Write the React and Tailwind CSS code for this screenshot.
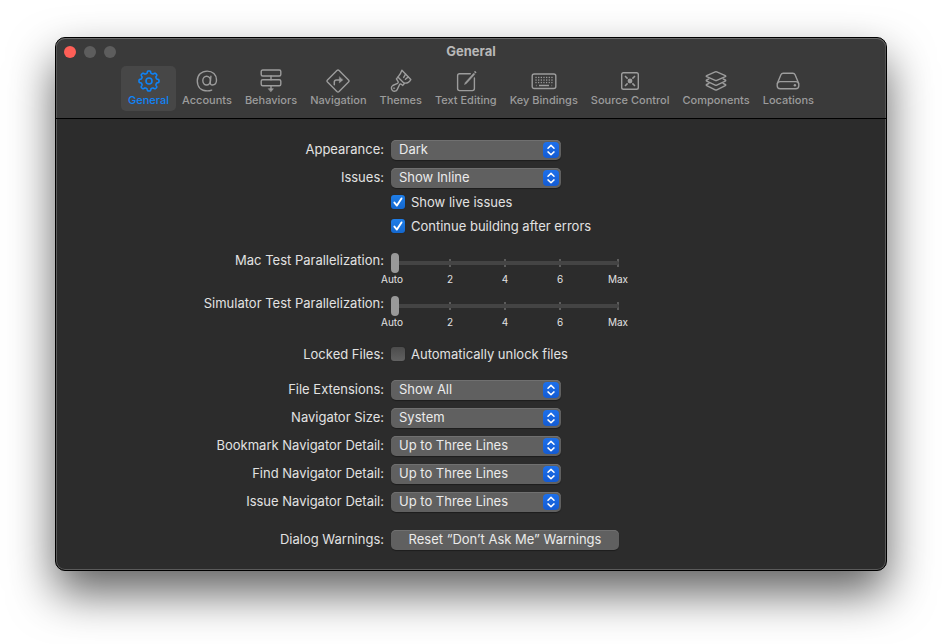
import { useState } from "react";

/* Smooth eight-toothed outline around the centre of the icon box. */
function gearOutline() {
  const points = [];
  for (let i = 0; i < 240; i++) {
    const a = (i / 240) * Math.PI * 2;
    const r = 8.9 + 1.1 * (Math.tanh(2.2 * Math.cos(8 * a)) / Math.tanh(2.2));
    points.push(`${(13 + r * Math.cos(a)).toFixed(2)} ${(12 + r * Math.sin(a)).toFixed(2)}`);
  }
  return `M${points.join("L")}Z`;
}

const GEAR = gearOutline();

function Icon({ children }) {
  return (
    <svg
      viewBox="0 0 26 24"
      className="h-6 w-[26px]"
      fill="none"
      stroke="currentColor"
      strokeWidth="1.4"
      strokeLinecap="round"
      strokeLinejoin="round"
      aria-hidden="true"
    >
      {children}
    </svg>
  );
}

const keyDots = [];
[7.8, 10.4, 12.9].forEach((y, row) => {
  for (let i = 0; i < 7; i++) keyDots.push([4.6 + i * 2.65, y, row]);
});

const TABS = [
  {
    name: "General",
    icon: (
      <Icon>
        <path d={GEAR} strokeWidth="1.6" />
        <circle cx="13" cy="12" r="3" strokeWidth="1.6" />
      </Icon>
    ),
  },
  {
    name: "Accounts",
    icon: (
      <Icon>
        <ellipse cx="12.6" cy="11.6" rx="3.8" ry="4.4" />
        <path d="M16.9 7.2l-.6 6.300c-.1 1.600.6 2.500 2 2.500 2.600 0 4.200-2 4.200-5 0-5.300-3.800-8.900-9.300-8.900-5.900 0-9.900 4-9.900 9.900 0 6.100 3.900 9.900 10 9.900 1.700 0 3.100-.3 4.400-.8" />
      </Icon>
    ),
  },
  {
    name: "Behaviors",
    icon: (
      <Icon>
        <rect x="3.200" y="1" width="19.600" height="6" rx="1.500" />
        <rect x="3.200" y="10.700" width="19.600" height="6" rx="1.500" />
        <path d="M13 7v3.700M13 16.700v3" />
        <path d="M10.600 19.700h4.800L13 22.600z" fill="currentColor" strokeWidth=".6" />
      </Icon>
    ),
  },
  {
    name: "Navigation",
    icon: (
      <Icon>
        <path d="M11.900 1.500a1.600 1.600 0 0 1 2.200 0l9.400 9.400a1.600 1.600 0 0 1 0 2.200l-9.400 9.400a1.600 1.600 0 0 1-2.200 0l-9.400-9.400a1.600 1.600 0 0 1 0-2.200z" />
        <path d="M9.300 15.700v-2.600a2.200 2.200 0 0 1 2.200-2.200h5" strokeWidth="1.500" />
        <path d="M14.300 7.900v6l3.600-3z" fill="currentColor" strokeWidth=".4" />
      </Icon>
    ),
  },
  {
    name: "Themes",
    icon: (
      <Icon>
        <path d="M13.900 1.200l8.900 9.400c-1.600 2.700-4 4-7 3.400L9.900 8.100c1.800-2.100 3.200-4.300 4-6.900z" />
        <path d="M17.600 5.100l-1.900 3.300M20.300 7.900l-2.900 2.300" />
        <path d="M9.900 8.100l-1.500 1.800 1.700 2.700c.4.800.2 1.300-.6 1.700l-4.700 2.200a3.100 3.100 0 1 0 4.500 3.900l2.200-4.600c.4-.8.9-1 1.700-.6l1.600 1.200 1.800-2.100" />
        <circle cx="6" cy="19.200" r=".7" fill="currentColor" strokeWidth=".3" />
      </Icon>
    ),
  },
  {
    name: "Text Editing",
    icon: (
      <Icon>
        <path d="M17.300 4.800H6.600a2 2 0 0 0-2 2v12.800a2 2 0 0 0 2 2h12.800a2 2 0 0 0 2-2V9" />
        <path d="M20.600 4.300l-8.300 9.200-.8 2 1.900-.9 8.300-9.200z" fill="currentColor" strokeWidth=".5" />
        <path d="M22 2.900l.6.600" strokeWidth="1.600" />
      </Icon>
    ),
  },
  {
    name: "Key Bindings",
    icon: (
      <Icon>
        <rect x="1.200" y="5" width="23.600" height="14.500" rx="2" />
        {keyDots.map(([x, y, row], i) => (
          <rect
            key={i}
            x={x - 0.2}
            y={y}
            width={row === 2 ? 1.2 : 1.3}
            height="1.300"
            fill="currentColor"
            stroke="none"
          />
        ))}
        <path d="M8 16.500h10M4.900 16.500h.6M20.600 16.500h.5" strokeWidth="1.300" strokeLinecap="butt" />
      </Icon>
    ),
  },
  {
    name: "Source Control",
    icon: (
      <Icon>
        <rect x="4.700" y="3.700" width="16.600" height="16.600" rx="1.800" />
        <circle cx="13" cy="12" r="2.400" fill="currentColor" stroke="none" />
        <path
          d="M8 7l2.600 2.600M18 7l-2.600 2.600M8 17l2.600-2.600M18 17l-2.600-2.600"
          strokeWidth="1.500"
          strokeLinecap="butt"
        />
      </Icon>
    ),
  },
  {
    name: "Components",
    icon: (
      <Icon>
        <path d="M12.200 2.900a2 2 0 0 1 1.600 0l8.500 3.700c.6.300.6.800 0 1.100l-8.500 3.700a2 2 0 0 1-1.600 0L3.700 7.700c-.6-.3-.6-.8 0-1.100z" />
        <path d="M5.900 9.900l-2.200 1.100c-.6.300-.6.800 0 1.100l8.500 4a2 2 0 0 0 1.600 0l8.500-4c.6-.3.6-.8 0-1.100l-2.200-1.100" />
        <path d="M5.900 14.400l-2.200 1.100c-.6.300-.6.800 0 1.100l8.500 4.300a2 2 0 0 0 1.600 0l8.500-4.300c.6-.3.6-.8 0-1.100l-2.200-1.100" />
      </Icon>
    ),
  },
  {
    name: "Locations",
    icon: (
      <Icon>
        <path d="M2.400 14.300l3.500-8.600a2.600 2.600 0 0 1 2.300-1.500h9.600a2.600 2.600 0 0 1 2.300 1.500l3.500 8.600" />
        <rect x="2.200" y="12.600" width="21.600" height="7.200" rx="3" />
        <circle cx="19.900" cy="16.200" r="1.200" fill="currentColor" stroke="none" />
      </Icon>
    ),
  },
];

const ROW = "grid grid-cols-[328px_1fr] gap-x-[7px]";
const LABEL = "text-right leading-[18px]";

function PopUp({ id, label, value, options }) {
  return (
    <div className={ROW}>
      <label htmlFor={id} className={LABEL}>
        {label}
      </label>
      <div className="relative h-5 w-[170px]">
        <select
          id={id}
          defaultValue={value}
          className="block h-5 w-full appearance-none rounded-[5px] bg-[#606060] pr-6 pb-0.5 pl-2 leading-[18px] text-[#ebebeb] shadow-[inset_0_1px_0_#707070,0_1px_1px_rgba(0,0,0,0.35)] outline-none"
        >
          {options.map((o) => (
            <option key={o}>{o}</option>
          ))}
        </select>
        <span className="pointer-events-none absolute top-0.5 right-0.5 flex size-4 items-center justify-center rounded-[4px] bg-linear-to-b from-[#1d70ea] to-[#145bd2]">
          <svg
            viewBox="0 0 16 16"
            className="size-4"
            fill="none"
            stroke="#fff"
            strokeWidth="1.500"
            strokeLinecap="round"
            strokeLinejoin="round"
            aria-hidden="true"
          >
            <path d="M5 6.200L8 3.400l3 2.800M5 9.900l3 2.800 3-2.800" />
          </svg>
        </span>
      </div>
    </div>
  );
}

function Check({ label, checked = false }) {
  return (
    <label className="flex h-5 w-fit items-center gap-1.5 leading-5">
      <span className="relative size-3.5">
        <input
          type="checkbox"
          defaultChecked={checked}
          className="peer block size-3.5 appearance-none rounded-[3px] bg-linear-to-b from-[#4c4c4c] to-[#616161] shadow-[0_0_1px_rgba(0,0,0,0.4)] checked:from-[#1f7ee8] checked:to-[#1468cf]"
        />
        <svg
          viewBox="0 0 14 14"
          className="pointer-events-none absolute inset-0 hidden size-3.5 peer-checked:block"
          fill="none"
          stroke="#fff"
          strokeWidth="1.900"
          strokeLinecap="round"
          strokeLinejoin="round"
          aria-hidden="true"
        >
          <path d="M3.400 7.600l2.500 3L10.500 3.400" />
        </svg>
      </span>
      {label}
    </label>
  );
}

const STOPS = "grid grid-cols-[58px_55px_55px_58px_0px]";

function Parallelization({ id, label }) {
  return (
    <div className={ROW}>
      <label htmlFor={id} className="h-4 text-right leading-[14px]">
        {label}
      </label>
      <div className="w-[228px]">
        <div className="relative h-5">
          <div className={`absolute inset-x-0 top-1.5 ${STOPS}`} aria-hidden="true">
            <span />
            <span className="h-2 w-0.5 bg-[#5c5c5c]" />
            <span className="h-2 w-0.5 bg-[#5c5c5c]" />
            <span className="h-2 w-0.5 bg-[#5c5c5c]" />
            <span className="h-2 w-0.5 bg-[#5c5c5c]" />
          </div>
          <input
            id={id}
            type="range"
            min="0"
            max="8"
            step="2"
            defaultValue="0"
            className="relative block h-5 w-full appearance-none bg-transparent outline-none [&::-webkit-slider-runnable-track]:h-1 [&::-webkit-slider-runnable-track]:rounded-full [&::-webkit-slider-runnable-track]:bg-[#444444] [&::-webkit-slider-thumb]:-mt-2 [&::-webkit-slider-thumb]:h-5 [&::-webkit-slider-thumb]:w-2 [&::-webkit-slider-thumb]:appearance-none [&::-webkit-slider-thumb]:rounded-full [&::-webkit-slider-thumb]:bg-[#999999]"
          />
        </div>
        <div className={`${STOPS} text-[10px] leading-[13px]`}>
          {["Auto", "2", "4", "6", "Max"].map((t) => (
            <span key={t} className="flex w-0.5 justify-center">
              {t}
            </span>
          ))}
        </div>
      </div>
    </div>
  );
}

const LINES = ["Up to Three Lines", "Up to Two Lines", "One Line"];

export default function App() {
  const [tab, setTab] = useState("General");
  return (
    <main className="min-h-screen bg-white px-[55px] pt-[37px] pb-[73px] font-['Inter','Liberation_Sans',sans-serif] text-[13px] text-[#e2e2e2]">
      <section className="overflow-hidden rounded-[10px] border border-black bg-[#2c2c2c] shadow-[0_22px_46px_rgba(0,0,0,0.62)]">
        <div className="rounded-[9px] shadow-[inset_0_0_0_1px_#5a5a5a]">
          <header className="rounded-t-[9px] border-b border-black bg-[#3a3a3a] pb-[7px] shadow-[inset_0_1px_0_#6a6a6a,inset_1px_0_0_#555555,inset_-1px_0_0_#555555]">
            <div className="grid h-7 grid-cols-[1fr_auto_1fr] items-center px-2">
              <div className="flex gap-2">
                <button type="button" aria-label="Close" className="size-3 rounded-full bg-[#fe5f57]" />
                <button type="button" aria-label="Minimize" className="size-3 rounded-full bg-[#5d5d5d]" />
                <button type="button" aria-label="Zoom" className="size-3 rounded-full bg-[#5d5d5d]" />
              </div>
              <h1 className="font-bold text-[#b8b8b8]">General</h1>
            </div>
            <nav className="flex justify-center -space-x-px">
              {TABS.map(({ name, icon }) => (
                <button
                  key={name}
                  type="button"
                  onClick={() => setTab(name)}
                  aria-pressed={tab === name}
                  className={`flex flex-col items-center rounded-[5px] px-[7px] pt-[3px] pb-1 text-[11px] leading-[14px] font-medium ${
                    tab === name ? "bg-[#474747] text-[#0f83f8]" : "text-[#9c9c9c]"
                  }`}
                >
                  {icon}
                  {name}
                </button>
              ))}
            </nav>
          </header>

          <form className="pt-[21px] pb-5" onSubmit={(e) => e.preventDefault()}>
            <div className="flex flex-col gap-2">
              <PopUp id="appearance" label="Appearance:" value="Dark" options={["Dark", "Light", "System"]} />
              <PopUp id="issues" label="Issues:" value="Show Inline" options={["Show Inline", "Show Minimized"]} />
            </div>
            <div className={`mt-1 ${ROW}`}>
              <div className="col-start-2 flex flex-col gap-1">
                <Check label="Show live issues" checked />
                <Check label="Continue building after errors" checked />
              </div>
            </div>

            <div className="mt-[17px] flex flex-col gap-2.5">
              <Parallelization id="mac" label="Mac Test Parallelization:" />
              <Parallelization id="simulator" label="Simulator Test Parallelization:" />
            </div>

            <div className={`mt-[15px] ${ROW}`}>
              <span className="text-right leading-5">Locked Files:</span>
              <Check label="Automatically unlock files" />
            </div>

            <div className="mt-4 flex flex-col gap-2">
              <PopUp id="extensions" label="File Extensions:" value="Show All" options={["Show All", "Hide All"]} />
              <PopUp id="size" label="Navigator Size:" value="System" options={["System", "Small", "Medium", "Large"]} />
              <PopUp id="bookmark" label="Bookmark Navigator Detail:" value={LINES[0]} options={LINES} />
              <PopUp id="find" label="Find Navigator Detail:" value={LINES[0]} options={LINES} />
              <PopUp id="issue" label="Issue Navigator Detail:" value={LINES[0]} options={LINES} />
            </div>

            <div className={`mt-[18px] ${ROW}`}>
              <span className={LABEL}>Dialog Warnings:</span>
              <button
                type="button"
                className="block h-5 w-[228px] rounded-[5px] bg-[#606060] pb-0.5 leading-[18px] text-[#ebebeb] shadow-[inset_0_1px_0_#707070,0_1px_1px_rgba(0,0,0,0.35)]"
              >
                Reset “Don’t Ask Me” Warnings
              </button>
            </div>
          </form>
        </div>
      </section>
    </main>
  );
}
